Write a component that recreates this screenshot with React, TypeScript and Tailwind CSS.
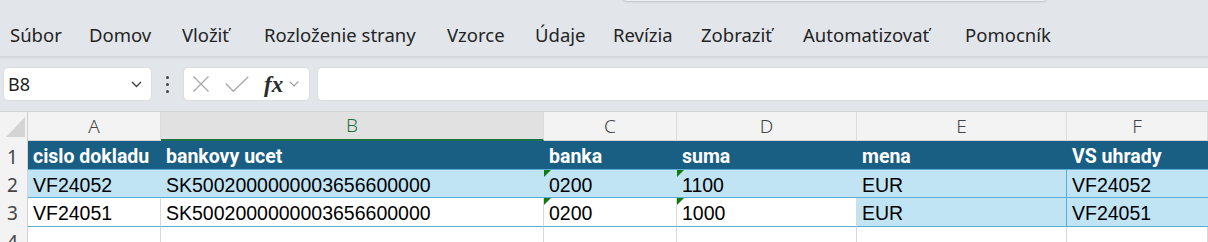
import React from "react";

const menu: [string, number][] = [
  ["Súbor", 79],
  ["Domov", 93],
  ["Vložiť", 82],
  ["Rozloženie strany", 183],
  ["Vzorce", 88],
  ["Údaje", 78],
  ["Revízia", 88],
  ["Zobraziť", 102],
  ["Automatizovať", 162],
  ["Pomocník", 120],
];

const cols = [
  { l: "A", w: "w-[133px]" },
  { l: "B", w: "w-[383px]" },
  { l: "C", w: "w-[133px]" },
  { l: "D", w: "w-[180px]" },
  { l: "E", w: "w-[210px]" },
  { l: "F", w: "w-[141px]" },
];

const header = ["cislo dokladu", "bankovy ucet", "banka", "suma", "mena", "VS uhrady"];
const rows = [
  ["VF24052", "SK5002000000003656600000", "0200", "1100", "EUR", "VF24052"],
  ["VF24051", "SK5002000000003656600000", "0200", "1000", "EUR", "VF24051"],
];

const Tri = () => (
  <span className="absolute left-0 top-0 h-0 w-0 border-t-[7px] border-r-[7px] border-t-[#107c10] border-r-transparent" />
);

export default function App() {
  return (
    <div
      className="relative w-[1208px] h-[242px] overflow-hidden bg-[#e2e6eb] text-[#222]"
      style={{ fontFamily: '"Noto Sans", "Open Sans", sans-serif' }}
    >
      <div className="absolute left-[623px] top-[-30px] h-[31px] w-[424px] rounded-b-[4px] bg-[#eceff2] shadow-[0_1px_2px_rgba(0,0,0,0.15)]" />
      {/* ribbon tabs */}
      <div className="flex h-[57px] items-center pl-[10px] pt-[13px] text-[18.5px] text-[#242424] border-b border-[#d3d7dc] shadow-[0_1px_2px_rgba(0,0,0,0.08)]">
        {menu.map(([t, w]) => (
          <div key={t} className="whitespace-nowrap shrink-0" style={{ width: w }}>
            {t}
          </div>
        ))}
      </div>
      {/* formula bar row */}
      <div className="flex h-[55px] items-start pt-[10px] border-b border-[#d4d4d4]">
        <div className="ml-[3px] flex h-[34px] w-[149px] items-center justify-between rounded-[5px] border border-[#dadde1] bg-white pl-[4px] pr-[9px] text-[18px] text-[#1f1f1f]">
          <span>B8</span>
          <svg width="11" height="7" viewBox="0 0 11 7" fill="none">
            <path d="M1 1l4.5 4.5L10 1" stroke="#444" strokeWidth="1.4" />
          </svg>
        </div>
        <div className="ml-[13px] flex h-[34px] w-[5px] flex-col items-center justify-center gap-[4px]">
          <span className="h-[3px] w-[3px] rounded-full bg-[#444]" />
          <span className="h-[3px] w-[3px] rounded-full bg-[#444]" />
          <span className="h-[3px] w-[3px] rounded-full bg-[#444]" />
        </div>
        <div className="ml-[13px] flex h-[34px] w-[127px] items-center rounded-[5px] border border-[#dadde1] bg-white pl-[8px]">
          <svg width="18" height="16" viewBox="0 0 18 16" fill="none">
            <path d="M1.5 0.5l15 15M16.5 0.5l-15 15" stroke="#a8a8a8" strokeWidth="1.3" />
          </svg>
          <svg className="ml-[15px]" width="24" height="16" viewBox="0 0 24 16" fill="none">
            <path d="M0.8 7.5l7.5 7.8L23.3 0.7" stroke="#a8a8a8" strokeWidth="1.3" />
          </svg>
          <span
            className="ml-[15px] text-[23px] italic font-bold leading-none text-[#2b2b2b]"
            style={{ fontFamily: '"Liberation Serif", "DejaVu Serif", serif' }}
          >
            fx
          </span>
          <svg className="ml-[6px]" width="10" height="6" viewBox="0 0 10 6" fill="none">
            <path d="M0.7 0.7l4.3 4.3L9.3 0.7" stroke="#9a9a9a" strokeWidth="1.2" />
          </svg>
        </div>
        <div className="ml-[7px] h-[34px] flex-1 rounded-l-[5px] border border-r-0 border-[#dadde1] bg-white" />
      </div>
      {/* grid */}
      <div style={{ fontFamily: '"Liberation Sans", Arial, sans-serif' }}>
        {/* column headers */}
        <div className="flex h-[29px] bg-[#f3f3f3]">
          <div className="relative w-[28px] shrink-0 border-r border-[#cfcfcf]">
            <svg className="absolute left-[6px] top-[5px]" width="19" height="20" viewBox="0 0 19 20">
              <path d="M19 0L19 20L0 20Z" fill="#d4d4d4" />
            </svg>
          </div>
          {cols.map((c) => (
            <div
              key={c.l}
              className={`${c.w} shrink-0 flex items-center justify-center text-[19px] font-light border-r border-[#dcdcdc] ${
                c.l === "B"
                  ? "bg-[#e1e1e1] text-[#1e7145] border-b-2 border-b-[#1e7145]"
                  : "text-[#444] border-b border-b-[#d4d4d4]"
              }`}
              style={{ fontFamily: '"Noto Sans", sans-serif' }}
            >
              {c.l}
            </div>
          ))}
        </div>
        {/* row 1 header */}
        <div className="flex h-[29px]">
          <div className="w-[28px] shrink-0 bg-[#f3f3f3] pl-[7px] pt-[2px] text-[19px] text-[#444] border-r border-[#d4d4d4]" style={{ fontFamily: '"Noto Sans", sans-serif' }}>
            1
          </div>
          <div className="flex flex-1 bg-[#195e83] text-white border-b border-[#5aaed6]">
            {cols.map((c, i) => (
              <div
                key={c.l}
                className={`${c.w} shrink-0 pl-[5px] pt-[1px] text-[19.5px] font-bold whitespace-nowrap`}
                style={{ fontFamily: 'Roboto, "Liberation Sans", sans-serif' }}
              >
                {header[i]}
              </div>
            ))}
          </div>
        </div>
        {rows.map((r, ri) => (
          <div key={ri} className={`flex ${ri === 0 ? "h-[28px]" : "h-[29px]"}`}>
            <div className="w-[28px] shrink-0 bg-[#f3f3f3] pl-[7px] pt-[1px] text-[19px] text-[#444] border-r border-[#d4d4d4]" style={{ fontFamily: '"Noto Sans", sans-serif' }}>
              {ri + 2}
            </div>
            {cols.map((c, i) => {
              const blue = ri === 0 || i >= 4;
              return (
                <div
                  key={c.l}
                  className={`relative ${c.w} shrink-0 pl-[5px] pt-[1px] text-[19.5px] whitespace-nowrap text-black border-b border-[#5aaed6] ${
                    blue ? "bg-[#c1e4f5]" : "bg-white"
                  } ${i === 4 ? "border-r border-r-[#5aaed6]" : !blue ? "border-r border-r-[#d9d9d9]" : ""}`}
                >
                  {(i === 2 || i === 3) && <Tri />}
                  {r[i]}
                </div>
              );
            })}
          </div>
        ))}
        <div className="flex h-[29px]">
          <div className="w-[28px] shrink-0 bg-[#f3f3f3] pl-[7px] pt-[1px] text-[19px] text-[#444] border-r border-[#d4d4d4]" style={{ fontFamily: '"Noto Sans", sans-serif' }}>
            4
          </div>
          {cols.map((c) => (
            <div key={c.l} className={`${c.w} shrink-0 bg-white border-r border-[#d9d9d9]`} />
          ))}
        </div>
      </div>
    </div>
  );
}
